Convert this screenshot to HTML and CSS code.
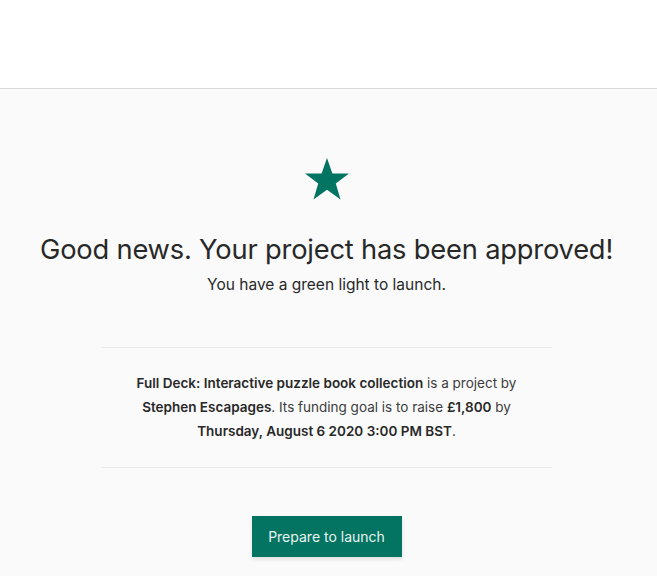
FILE: index.html
```html
<!DOCTYPE html>
<html>
<head>
<meta charset="utf-8">
<link rel="stylesheet" href="styles.css">
</head>
<body>
<header class="topbar"></header>
<main class="page">
  <div class="icon">
    <svg width="46" height="44" viewBox="0 0 46 44"><polygon fill="#037362" points="23,1 28.4,16.4 45,16.6 31.8,26.4 36.5,42.5 23,32.8 9.5,42.5 14.2,26.4 1,16.6 17.6,16.4"/></svg>
  </div>
  <h1 class="title">Good news. Your project has been approved!</h1>
  <p class="subtitle">You have a green light to launch.</p>
  <section class="details">
    <p><b>Full Deck: Interactive puzzle book collection</b> is a project by <b>Stephen Escapages</b>. Its funding goal is to raise <b>£1,800</b> by <b>Thursday, August 6 2020 3:00 PM BST</b>.</p>
  </section>
  <div class="actions">
    <button class="btn">Prepare to launch</button>
  </div>
</main>
</body>
</html>
```
FILE: styles.css
```css
html, body { margin: 0; padding: 0; }
body {
  font-family: Inter, "Noto Sans", sans-serif;
  color: #282828;
  background: #fafafa;
  height: 576px;
  overflow: hidden;
}
.topbar {
  height: 88px;
  background: #fff;
  border-bottom: 1px solid #d9d9d9;
}
.page {
  display: flex;
  flex-direction: column;
  align-items: center;
  padding-top: 68px;
  padding-right: 4px;
}
.icon { height: 44px; display: flex; }
.title {
  margin: 31px 0 0;
  font-size: 27.3px;
  font-weight: 400;
  line-height: 36px;
  letter-spacing: -0.2px;
  color: #282828;
}
.subtitle {
  margin: 6px 0 0;
  font-size: 15.5px;
  line-height: 22px;
  color: #282828;
}
.details {
  width: 450px;
  box-sizing: border-box;
  margin-top: 51px;
  border-top: 1px solid #eaeaea;
  border-bottom: 1px solid #eaeaea;
  padding: 23px 30px 24px;
  text-align: center;
}
.details p {
  margin: 0;
  font-size: 13.5px;
  line-height: 24px;
  color: #3c3c3c;
}
.details b { font-weight: 600; color: #282828; }
.actions { margin-top: 48px; }
.btn {
  width: 150px;
  height: 41px;
  border: 0;
  background: #037362;
  color: #e8f5f1;
  font-family: inherit;
  font-size: 14px;
  box-shadow: 0 2px 4px rgba(0,0,0,0.12);
}
```
